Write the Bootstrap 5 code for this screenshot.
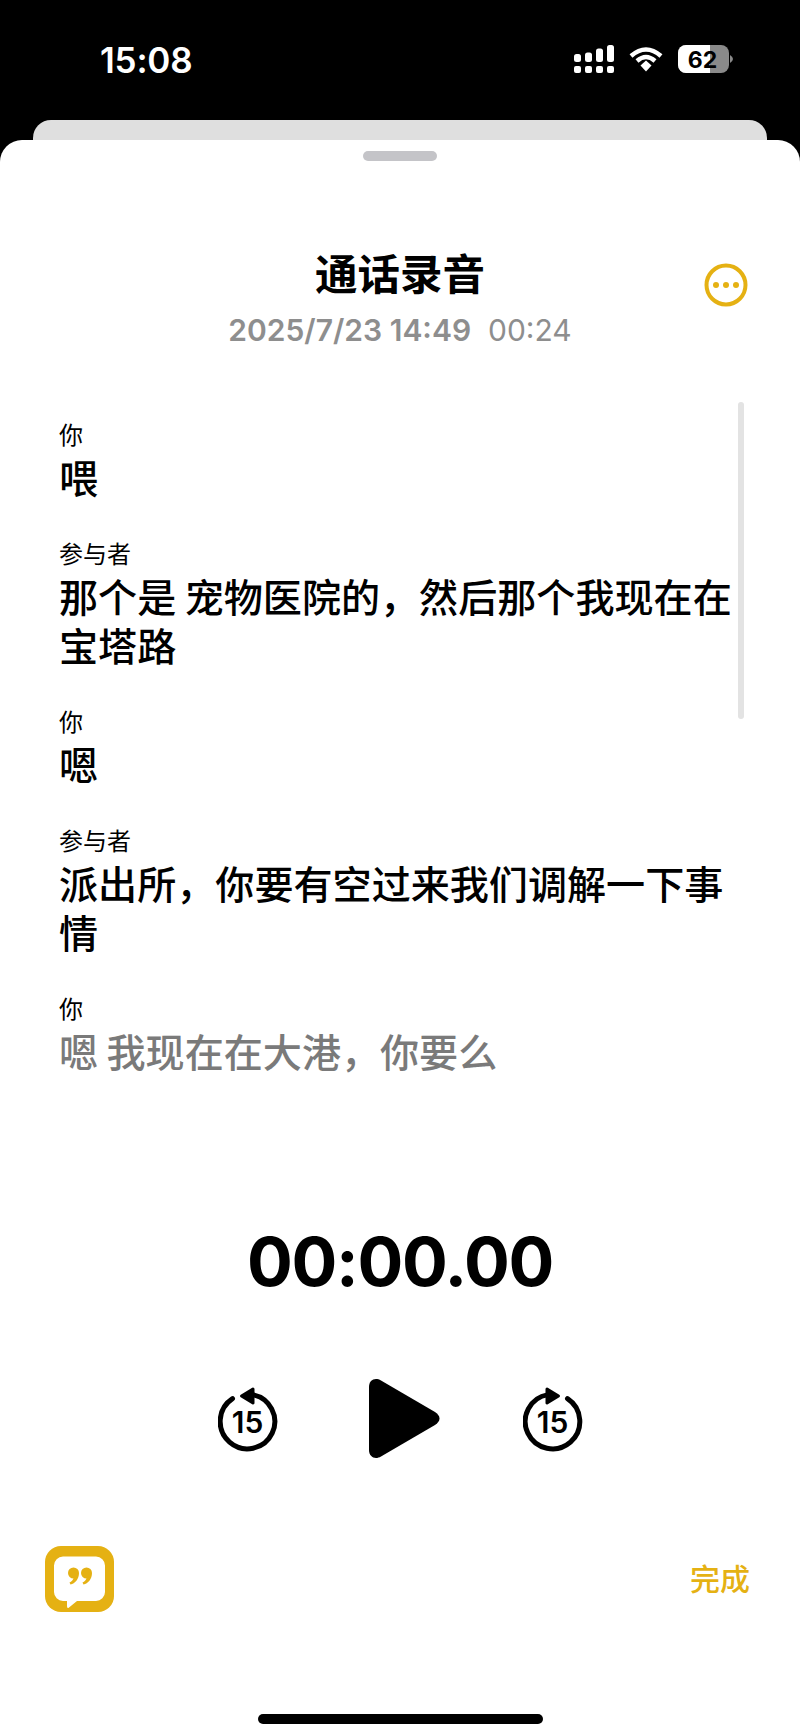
<!DOCTYPE html>
<html lang="zh">

<head>
  <meta charset="utf-8">
  <meta name="viewport" content="width=device-width">
  <title>通话录音</title>
  <link href="https://cdn.jsdelivr.net/npm/bootstrap@5.3.2/dist/css/bootstrap.min.css" rel="stylesheet" type="text/css" />
  <style>
    html, body { height: 100%; }
    body { background: #000; font-family: Inter, "Noto Sans CJK SC", sans-serif; color: #000; overflow: hidden; }
    .phone { height: 1734px; }
    .status-row { height: 120px; padding: 45px 67px 0 100px; color: #fff; }
    .clock { font-size: 35px; font-weight: 600; line-height: 30px; letter-spacing: -.2px; }
    .status-icons { gap: 15px; }
    .back-sheet { height: 40px; margin: 0 33px -20px; background: #dfdfdf; border-radius: 18px 18px 0 0; }
    .sheet { height: 1594px; background: #fff; border-radius: 22px 22px 0 0; position: relative; }
    .grabber { width: 74px; height: 10px; border-radius: 5px; background: #c4c4c8; margin: 0 auto; position: relative; top: 11px; }
    .head-block { padding-top: 100px; text-align: center; height: 271px; }
    .rec-title { font-size: 42.5px; line-height: 50px; font-weight: 700; margin: 0; }
    .rec-meta { font-size: 30px; line-height: 40px; color: #8e8e8e; margin-top: 10px; }
    .rec-meta b { font-weight: 600; }
    .more-btn { position: absolute; left: 704px; top: 123px; }
    .scroll-thumb { position: absolute; left: 738px; top: 262px; width: 6px; height: 317px; border-radius: 3px; background: #e3e3e3; }
    .lines { padding: 0 60px 0 59px; height: 796px; }
    .who { font-size: 24px; line-height: 30px; margin-bottom: 3px; }
    .said { font-size: 39.1px; line-height: 49px; font-weight: 500; margin-bottom: 37px; word-spacing: -2px; }
    .said.pending { color: #7a7a7a; }
    .timer { font-size: 68px; line-height: 88px; font-weight: 700; text-align: center; letter-spacing: -1.3px; }
    .transport { margin-top: 74px; height: 79px; }
    .skip-icon { margin-top: 8px; }
    .play-icon { margin: 0 83px 0 91px; }
    .foot-row { padding: 0 50px 0 45px; margin-top: 88px; }
    .done-link { color: #e5b113; font-size: 30px; font-weight: 500; }
    .home-bar { position: absolute; left: 258px; bottom: 10px; width: 285px; height: 10px; border-radius: 5px; background: #000; }
    svg text { font-family: Inter, sans-serif; }
  </style>
</head>

<body>
  <div class="phone">
    <div class="status-row d-flex justify-content-between align-items-start">
      <div class="clock">15:08</div>
      <div class="status-icons d-flex align-items-center">
        <svg width="40" height="28" viewBox="0 0 40 28" fill="#fff">
          <rect x="0" y="9" width="7" height="8" rx="2.5"/><rect x="11" y="7.5" width="7" height="9.5" rx="2.5"/>
          <rect x="22" y="3.5" width="7" height="13.5" rx="2.5"/><rect x="33" y="0" width="7" height="17" rx="2.5"/>
          <rect x="0" y="21" width="7" height="7" rx="2"/><rect x="11" y="21" width="7" height="7" rx="2"/>
          <rect x="22" y="21" width="7" height="7" rx="2"/><rect x="33" y="21" width="7" height="7" rx="2"/>
        </svg>
        <svg width="34" height="26" viewBox="0 0 34 26" fill="none" stroke="#fff" stroke-width="4.4">
          <path d="M2 10 Q17 -3 32 10"/><path d="M8 15 Q17 7 26 15"/>
          <path d="M11.5 19.5 L17 14.5 L22.5 19.5 L17 25.5 Z" fill="#fff" stroke="none"/>
        </svg>
        <svg width="55" height="28" viewBox="0 0 55 28">
          <rect x="0" y="0" width="51" height="28" rx="8" fill="#8a8a8a"/>
          <path d="M8 0 H32 V28 H8 A8 8 0 0 1 0 20 V8 A8 8 0 0 1 8 0 Z" fill="#fff"/>
          <path d="M52 10 Q55 12 55 14 Q55 16 52 18 Z" fill="#8a8a8a"/>
          <text x="24.5" y="23" text-anchor="middle" font-size="23" font-weight="700" fill="#000">62</text>
        </svg>
      </div>
    </div>
    <div class="back-sheet"></div>
    <div class="sheet">
      <div class="grabber"></div>
      <div class="head-block">
        <h1 class="rec-title">通话录音</h1>
        <div class="rec-meta"><b>2025/7/23 14:49</b>&nbsp; 00:24</div>
      </div>
      <svg class="more-btn" width="44" height="44" viewBox="0 0 44 44" fill="#e5b113">
        <circle cx="22" cy="22" r="19.5" fill="none" stroke="#e5b113" stroke-width="4"/>
        <circle cx="12" cy="22" r="3"/><circle cx="22" cy="22" r="3"/><circle cx="32" cy="22" r="3"/>
      </svg>
      <div class="scroll-thumb"></div>
      <div class="lines">
        <div class="who">你</div>
        <div class="said">喂</div>
        <div class="who">参与者</div>
        <div class="said">那个是 宠物医院的，然后那个我现在在宝塔路</div>
        <div class="who">你</div>
        <div class="said">嗯</div>
        <div class="who">参与者</div>
        <div class="said">派出所，你要有空过来我们调解一下事情</div>
        <div class="who">你</div>
        <div class="said pending">嗯 我现在在大港，你要么</div>
      </div>
      <div class="timer">00:00.00</div>
      <div class="transport d-flex justify-content-center align-items-start">
        <svg class="skip-icon" width="60" height="66" viewBox="0 0 60 66" fill="none" stroke="#000" stroke-width="5" stroke-linecap="round">
          <path d="M14.5 11.7 A27.3 27.3 0 1 0 34 7.6"/>
          <path d="M35 2 L23.5 9 L35 16 Z" fill="#000" stroke-linejoin="round" stroke-width="3"/>
          <text x="29.5" y="46" text-anchor="middle" font-size="30" font-weight="600" fill="#000" stroke="none">15</text>
        </svg>
        <svg class="play-icon" width="71" height="79" viewBox="0 0 71 79">
          <path d="M0 8 C0 1 6 -2 12 1.5 L66 33 C72 37 72 42 66 46 L12 77.5 C6 81 0 78 0 71 Z" fill="#000"/>
        </svg>
        <svg class="skip-icon" width="60" height="66" viewBox="0 0 60 66" fill="none" stroke="#000" stroke-width="5" stroke-linecap="round">
          <path d="M44.5 11.7 A27.3 27.3 0 1 1 25 7.6"/>
          <path d="M24 2 L35.5 9 L24 16 Z" fill="#000" stroke-linejoin="round" stroke-width="3"/>
          <text x="29.5" y="46" text-anchor="middle" font-size="30" font-weight="600" fill="#000" stroke="none">15</text>
        </svg>
      </div>
      <div class="foot-row d-flex justify-content-between align-items-center">
        <svg width="69" height="66" viewBox="0 0 69 66">
          <rect width="69" height="66" rx="16" fill="#e5b113"/>
          <path d="M18 10.5 H51 A9 9 0 0 1 60 19.5 V46 A9 9 0 0 1 51 55 H32 L24 61.5 Q22 63 22 60 V55 H18 A9 9 0 0 1 9 46 V19.5 A9 9 0 0 1 18 10.5 Z" fill="#fff"/>
          <g fill="#e5b113">
            <path d="M23 27 A5.5 5.5 0 0 1 34 27 C34 33 30 37.5 25.5 38.5 L24.5 36.5 C26.5 35.5 28 34 28.5 32.5 A5.5 5.5 0 0 1 23 27 Z"/>
            <path d="M36 27 A5.5 5.5 0 0 1 47 27 C47 33 43 37.5 38.5 38.5 L37.5 36.5 C39.5 35.5 41 34 41.5 32.5 A5.5 5.5 0 0 1 36 27 Z"/>
          </g>
        </svg>
        <div class="done-link">完成</div>
      </div>
      <div class="home-bar"></div>
    </div>
  </div>
</body>

</html>
